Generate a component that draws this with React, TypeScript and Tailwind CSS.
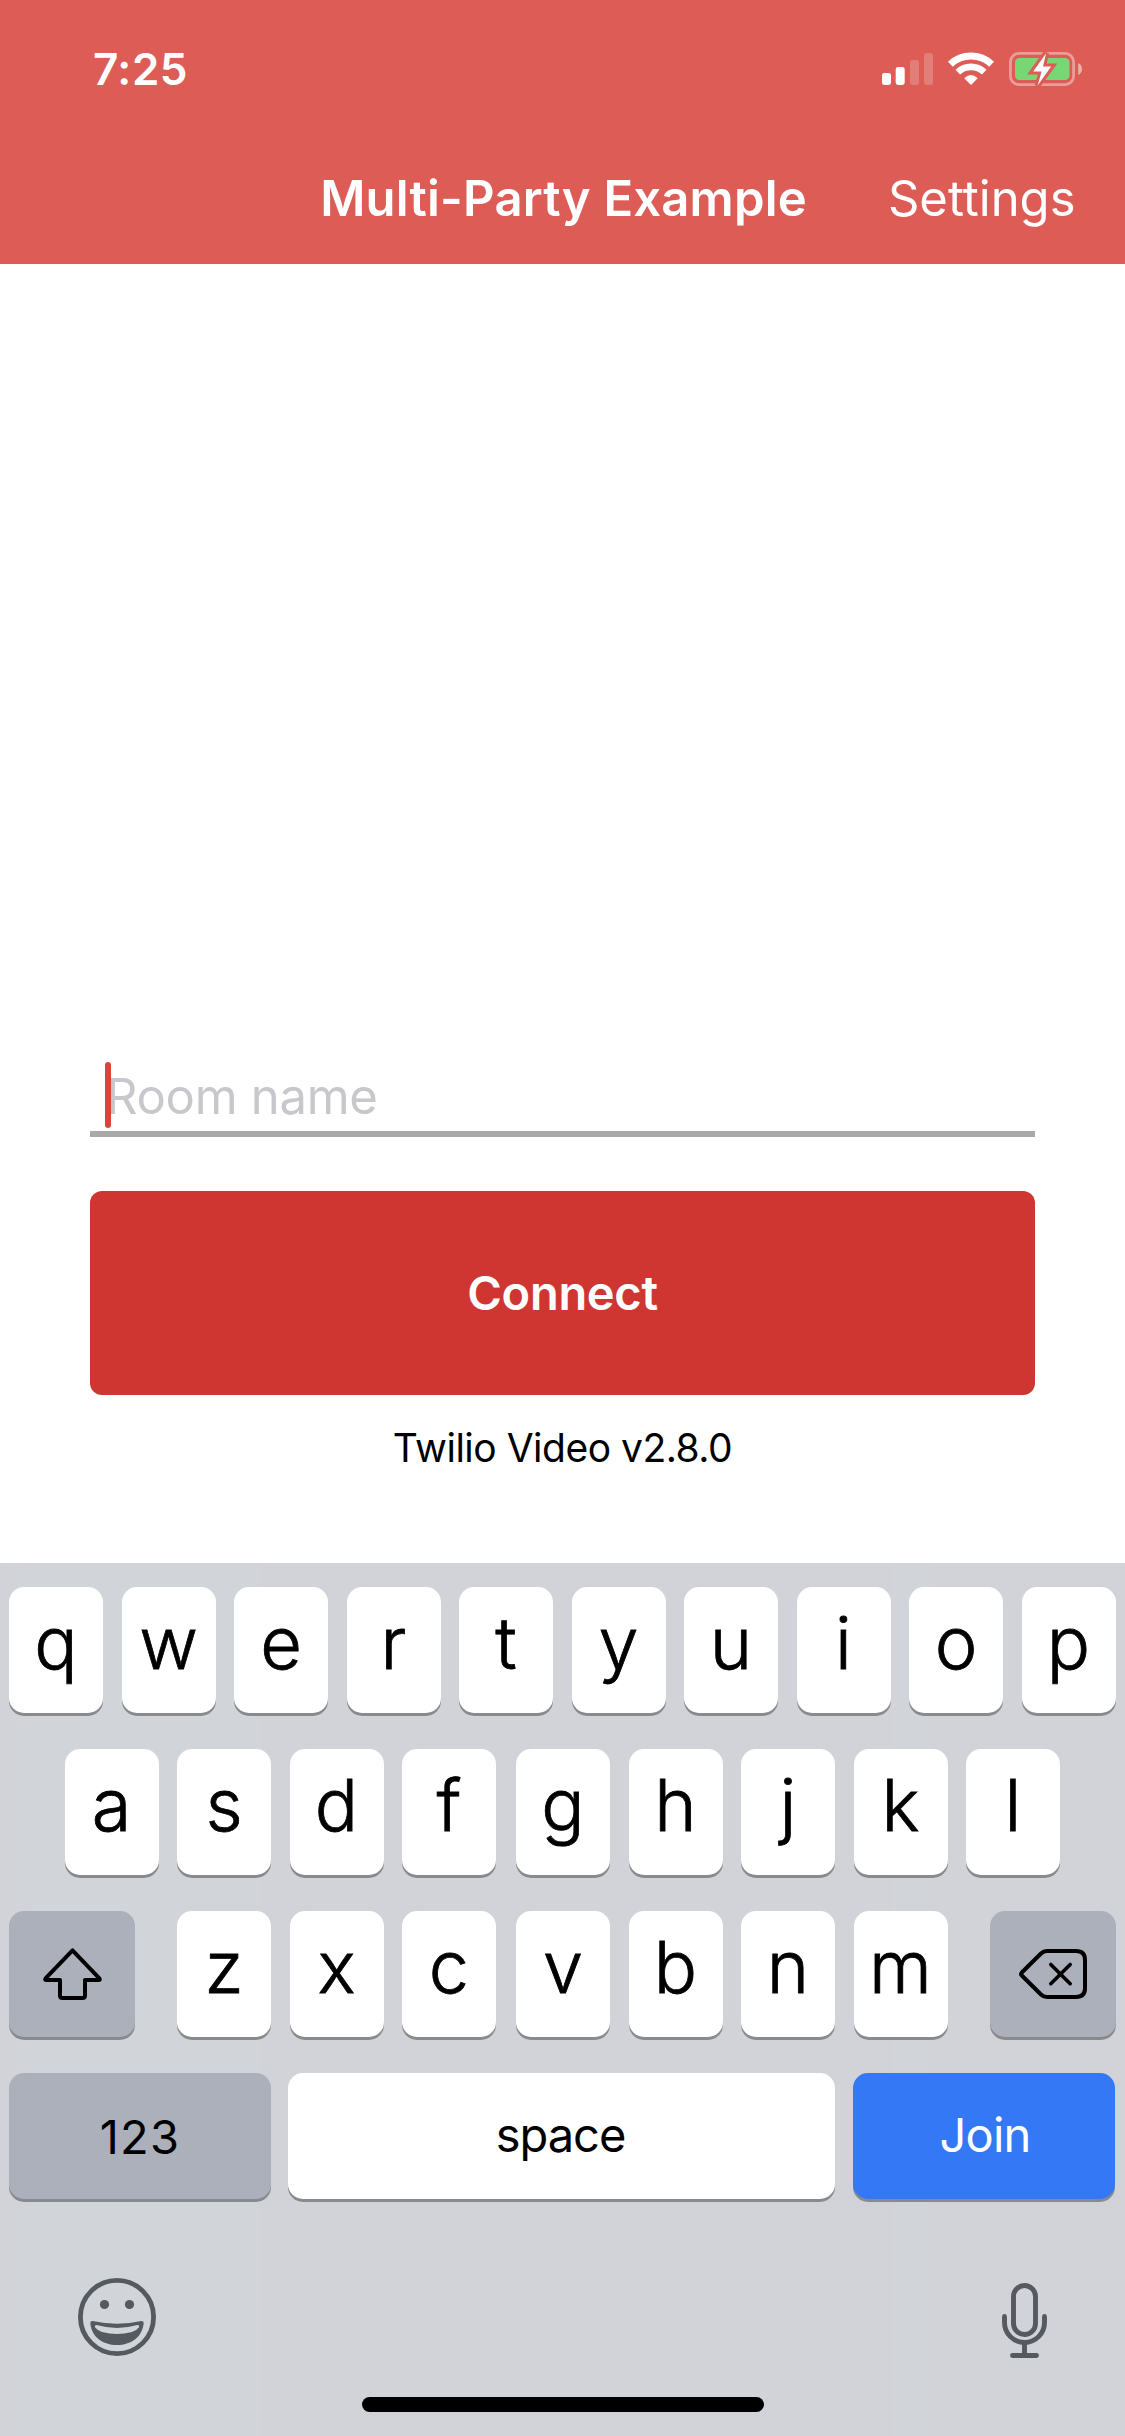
import React, { type ReactNode } from "react";

function StatusIcons() {
  return (
    <svg width="212" height="50" viewBox="876 44 212 50" fill="#fff" aria-label="Signal, Wi-Fi and battery">
      <rect x="882" y="73" width="9" height="12" rx="2.4" />
      <rect x="895.7" y="67" width="9" height="18" rx="2.4" />
      <rect x="910" y="60" width="9" height="25" rx="2.4" opacity="0.2" />
      <rect x="924" y="53" width="9" height="32" rx="2.4" opacity="0.2" />
      <g fill="none" stroke="#fff">
        <path d="M950.4 64.2 A30 30 0 0 1 991.6 64.2" strokeWidth="7" />
        <path d="M957.8 72.2 A19 19 0 0 1 984.2 72.2" strokeWidth="6.6" />
      </g>
      <path d="M971 85 L964.3 78.2 Q971 71.8 977.7 78.2 Z" />
      <rect x="1010.4" y="53.4" width="63.2" height="31.2" rx="8.5" fill="none" stroke="#fff" strokeWidth="2.8" opacity="0.4" />
      <path d="M1078.2 63 Q1082 65 1082 69 Q1082 73 1078.2 75 Z" opacity="0.5" />
      <rect x="1015" y="58" width="54.5" height="22" rx="4.5" fill="#78D775" />
      <path d="M1046.3 53 L1033 71.6 H1042 L1037.4 85.6 L1051.4 66.6 H1042.8 Z" fill="#DD5D56" stroke="#DD5D56" strokeWidth="6" />
      <path d="M1046 53.5 L1033.2 71.6 H1041.6 L1037.6 85.4 L1051.2 66.4 H1043 Z" />
    </svg>
  );
}

function ShiftIcon() {
  return (
    <svg width="63" height="56" viewBox="41 1946 63 56" fill="none" stroke="#000" strokeWidth="4" strokeLinejoin="round">
      <path d="M72.5 1950.4 L45.6 1978.4 Q44.4 1980 46.4 1980 H60 V1995.5 Q60 1998 62.5 1998 H82.5 Q85 1998 85 1995.5 V1980 H98.6 Q100.6 1980 99.4 1978.4 Z" />
    </svg>
  );
}

function DeleteIcon() {
  return (
    <svg width="72" height="54" viewBox="1017 1947 72 54" fill="none" stroke="#000" strokeWidth="4" strokeLinejoin="round" strokeLinecap="round">
      <path d="M1047 1951 H1076 Q1085 1951 1085 1960 V1988 Q1085 1997 1076 1997 H1047 Q1043.5 1997 1041 1994.5 L1021.8 1975.5 Q1020.4 1974 1021.8 1972.5 L1041 1953.5 Q1043.5 1951 1047 1951 Z" />
      <path d="M1050.8 1964.5 L1070.2 1983.7 M1070.2 1964.5 L1050.8 1983.7" strokeWidth="3.6" />
    </svg>
  );
}

function EmojiIcon() {
  return (
    <svg width="80" height="80" viewBox="77 2277 80 80" fill="#555A60">
      <circle cx="117" cy="2317" r="36.6" fill="none" stroke="#555A60" strokeWidth="4.8" />
      <circle cx="104.5" cy="2304.5" r="4.6" />
      <circle cx="129.5" cy="2304.5" r="4.6" />
      <path
        fillRule="evenodd"
        d="M92.8 2321 Q90 2320.5 90.3 2323.5 C92 2337.5 103 2345 117 2345 C131 2345 142 2337.5 143.7 2323.5 Q144 2320.5 141.2 2321 Q117 2326.5 92.8 2321 Z M96.5 2325 Q117 2330.8 137.5 2325 Q139.8 2325 138.8 2327.5 Q136.5 2330.5 132 2332 Q117 2336 102 2332 Q97.5 2330.5 95.2 2327.5 Q94.2 2325 96.5 2325 Z"
      />
    </svg>
  );
}

function MicIcon() {
  return (
    <svg width="49" height="79" viewBox="1000 2281 49 79" fill="none" stroke="#555A60" strokeWidth="4.9" strokeLinecap="round">
      <rect x="1013.5" y="2285.5" width="22" height="49" rx="11" />
      <path d="M1004.5 2316.5 V2322.5 A20 20 0 0 0 1044.5 2322.5 V2316.5" />
      <path d="M1024.5 2344 V2354 M1012.5 2355.5 H1036.5" />
    </svg>
  );
}

function Key({ children, className = "" }: { children: ReactNode; className?: string }) {
  return (
    <button
      type="button"
      className={`flex h-[126px] shrink-0 items-center justify-center rounded-[15px] shadow-[0_3px_0_#898A8D] ${className}`}
    >
      {children}
    </button>
  );
}

function Letters({ letters }: { letters: string }) {
  return (
    <div className="flex gap-[18.5px]">
      {letters.split("").map((letter) => (
        <Key key={letter} className="w-[94px] bg-white text-[72px] leading-none font-light [-webkit-text-stroke:0.8px_#000]">
          <span className="-translate-y-[7px]">{letter}</span>
        </Key>
      ))}
    </div>
  );
}

export default function App() {
  return (
    <div className="flex h-[2436px] w-[1125px] flex-col overflow-hidden bg-white font-['Inter','Liberation_Sans',sans-serif] text-black">
      <header className="h-[264px] bg-[#DD5D56] text-white">
        <div className="flex h-[138px] items-center justify-between pr-[37px] pl-[93px]">
          <span className="text-[44px] leading-none font-semibold tracking-[0.5px]">7:25</span>
          <StatusIcons />
        </div>
        <nav className="flex h-[120px] items-center justify-end gap-[81px] pr-[49.5px] text-[49px] leading-none">
          <h1 className="font-semibold tracking-[0.2px]">Multi-Party Example</h1>
          <span>Settings</span>
        </nav>
      </header>

      <main className="flex h-[1299px] flex-col justify-end px-[90px] pb-[85px]">
        <div className="relative flex h-[82px] items-center border-b-[6px] border-[#A9A9A9] pt-[6px] pl-4">
          <span className="text-[49px] leading-none tracking-[-0.3px] text-[#C7C7CC]">Room name</span>
          <span className="absolute top-[7px] left-[15px] h-[66px] w-[6px] rounded-full bg-[#DB4539]" />
        </div>
        <button
          type="button"
          className="mt-[54px] h-[204px] shrink-0 rounded-[12px] bg-[#CF3531] text-[47px] font-semibold tracking-[-0.3px] text-white"
        >
          Connect
        </button>
        <p className="mt-[23px] text-center text-[39px] leading-[60px] tracking-[-0.5px]">Twilio Video v2.8.0</p>
      </main>

      <section className="flex h-[873px] flex-col bg-[linear-gradient(to_right,#D2D3D8_0,#D1D4D9_32px,#D1D5D9_158px,#D1D4D9_258px,#D2D3D8_262px,#D2D3D8_890px,#D1D4D8_895px,#D1D4D8_928px,#D2D3D8_932px)] pt-6">
        <div className="flex flex-col gap-9">
          <div className="pl-[9px]">
            <Letters letters="qwertyuiop" />
          </div>
          <div className="flex gap-5 pl-[64.5px]">
            <Letters letters="asdf" />
            <Letters letters="ghjkl" />
          </div>
          <div className="flex pl-[9px]">
            <Key className="w-[126px] bg-[#ABB0BB]">
              <ShiftIcon />
            </Key>
            <div className="flex gap-5 pl-[42px]">
              <Letters letters="zxc" />
              <Letters letters="vbnm" />
            </div>
            <Key className="ml-[42.5px] w-[126px] bg-[#ABB0BB]">
              <DeleteIcon />
            </Key>
          </div>
          <div className="flex pl-[9px] text-[47px] leading-none">
            <Key className="w-[262px] bg-[#ABB0BB]">
              <span className="tracking-[1.2px]">123</span>
            </Key>
            <Key className="ml-[17px] w-[547px] bg-white">
              <span className="-translate-x-px -translate-y-[2px] tracking-[-1px]">space</span>
            </Key>
            <Key className="ml-[18px] w-[262px] bg-[#3478F6] text-white">
              <span className="translate-x-px -translate-y-[2px] tracking-[-0.8px]">Join</span>
            </Key>
          </div>
        </div>
        <div className="mt-[78px] flex h-[83px] items-start justify-between pr-[76px] pl-[77px]">
          <EmojiIcon />
          <div className="pt-1">
            <MicIcon />
          </div>
        </div>
        <div className="mx-auto mt-[37px] h-[15px] w-[402px] rounded-full bg-black" />
      </section>
    </div>
  );
}
